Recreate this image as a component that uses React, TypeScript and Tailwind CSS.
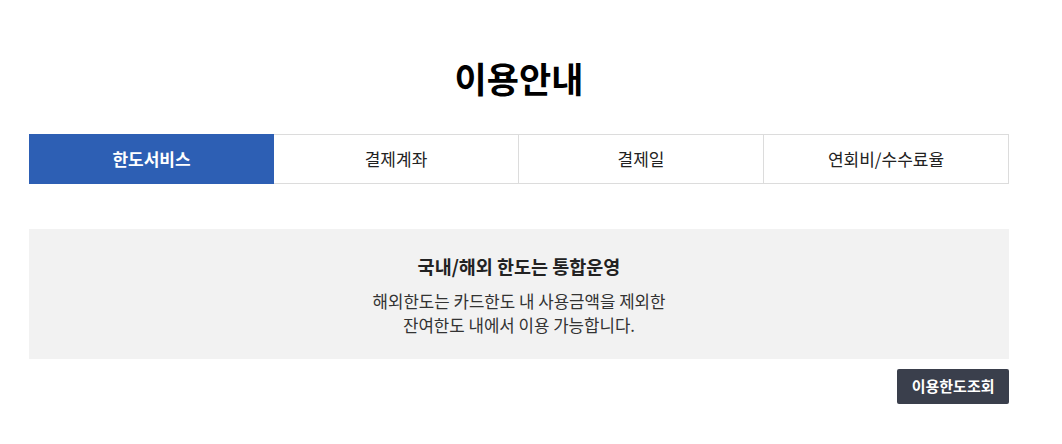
import { useState } from "react";

const tabs = ["한도서비스", "결제계좌", "결제일", "연회비/수수료율"];

export default function App() {
    const [active, setActive] = useState(0);

    return (
        <div className="w-[1062px] h-[444px] bg-white" style={{ fontFamily: '"Noto Sans CJK KR", "Noto Sans", sans-serif' }}>
            <div className="ml-[29px] w-[980px] pt-[52px]">
                <h1 className="text-center text-[35px] font-bold leading-[52px] text-black">이용안내</h1>

                <ul className="mt-[30px] flex h-[50px]">
                    {tabs.map((tab, i) => (
                        <li key={tab} className="flex-1">
                            <button
                                onClick={() => setActive(i)}
                                className={
                                    i === active
                                        ? "w-full h-full bg-[#2d5fb4] text-white font-bold text-[17px]"
                                        : "w-full h-full bg-white text-[#222] text-[17px] border-y border-r border-[#dcdcdc]"
                                }
                            >
                                {tab}
                            </button>
                        </li>
                    ))}
                </ul>

                <div className="mt-[45px] h-[130px] pt-[2px] bg-[#f2f2f2] flex flex-col items-center justify-center text-[#222]">
                    <p className="text-[18.5px] font-bold leading-[26px]">국내/해외 한도는 통합운영</p>
                    <p className="mt-[10px] text-[16.8px] leading-[24px] text-center text-[#333]">
                        해외한도는 카드한도 내 사용금액을 제외한
                        <br />
                        잔여한도 내에서 이용 가능합니다.
                    </p>
                </div>

                <div className="mt-[10px] flex justify-end">
                    <button className="h-[35px] px-[14.5px] rounded-[2px] bg-[#3a3f4c] text-white text-[15px] font-bold">
                        이용한도조회
                    </button>
                </div>
            </div>
        </div>
    );
}
